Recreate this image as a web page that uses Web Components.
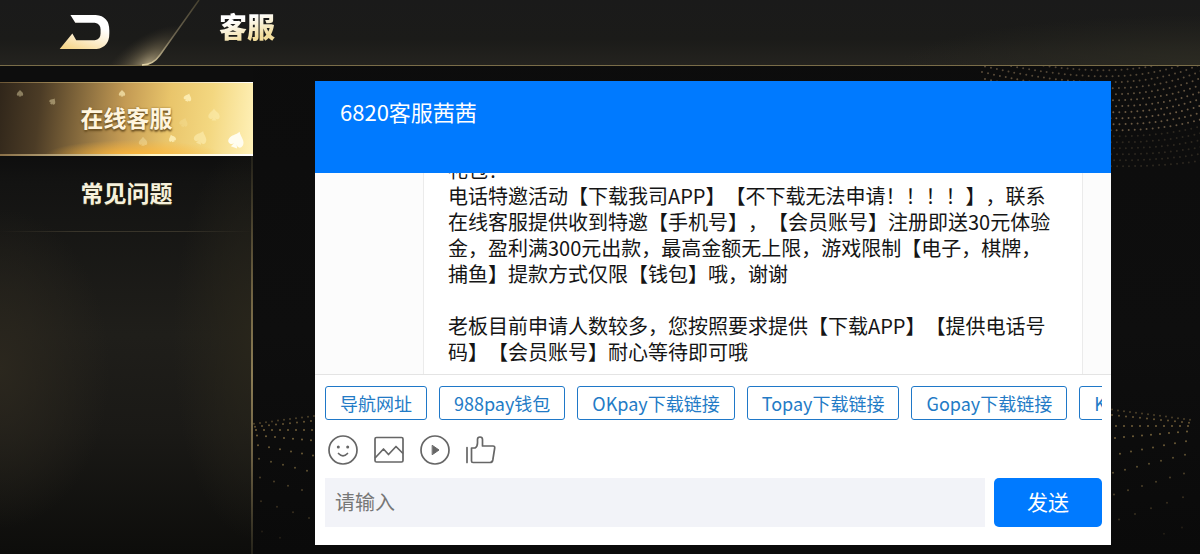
<!DOCTYPE html>
<html lang="zh-CN">
<head>
<meta charset="utf-8">
<meta name="viewport" content="width=device-width, initial-scale=1">
<title>客服</title>
<style>
html, body { margin: 0; height: 100%; background: #0b0b0b; }
body { font-family: "Noto Sans CJK SC", sans-serif; overflow: hidden; }
</style>
</head>
<body>
<service-page>
  <top-bar slot="header">客服</top-bar>
  <side-menu slot="menu">
    <side-item active>在线客服</side-item>
    <side-item>常见问题</side-item>
  </side-menu>
  <chat-panel>
    <span slot="title">6820客服茜茜</span>
    <chat-message slot="log">礼包！
电话特邀活动【下载我司APP】【不下载无法申请！！！！】，联系在线客服提供收到特邀【手机号】，【会员账号】注册即送30元体验金，盈利满300元出款，最高金额无上限，游戏限制【电子，棋牌，捕鱼】提款方式仅限【钱包】哦，谢谢

老板目前申请人数较多，您按照要求提供【下载APP】【提供电话号码】【会员账号】耐心等待即可哦</chat-message>
    <quick-reply slot="quick">导航网址</quick-reply>
    <quick-reply slot="quick">988pay钱包</quick-reply>
    <quick-reply slot="quick">OKpay下载链接</quick-reply>
    <quick-reply slot="quick">Topay下载链接</quick-reply>
    <quick-reply slot="quick">Gopay下载链接</quick-reply>
    <quick-reply slot="quick">K</quick-reply>
  </chat-panel>
</service-page>
<script>
class Base extends HTMLElement {
  constructor() {
    super();
    this.attachShadow({ mode: 'open' }).innerHTML = this.constructor.markup;
  }
}

customElements.define('dot-field', class extends HTMLElement {
  constructor() {
    super();
    // Receding rows of dots: [start y, slope, spacing, opacity].
    const rows = [
      [12, -.13, 6, .5], [15, -.1, 7, .7], [18, 0, 8, .8], [23, .09, 9, .8], [32, .19, 11, .75],
      [45, .25, 12, .65], [63, .3, 14, .5], [86, .35, 16, .35], [116, .35, 18, .2]];
    const wave = rows.map(([y, slope, step, o], i) => {
      let row = '';
      for (let x = 2 + i; x < 90; x += step) row += `<circle cx="${x}" cy="${y + x * slope}" r="1" opacity="${o}"/>`;
      return row;
    }).join('');
    let arcs = '';
    for (let i = 0; i < 18; i++) {
      const y = i * 6, o = i < 12 ? .75 - Math.abs(i - 9) * .03 : .25;
      arcs += `<path d="M${10 + i * 3} ${y - 22 + i} Q${165 + i} ${y + 20 - i} 245 ${y - 25 + i}" opacity="${o}"/>`;
    }
    this.attachShadow({ mode: 'open' }).innerHTML = `
      <style>
        :host { display: block; position: absolute; inset: 0; overflow: hidden; pointer-events: none;
          background: linear-gradient(#0c0c0c, #0e0e0e 60%, #0a0a0a); }
        svg { position: absolute; fill: #8b7445; }
        .arcs { top: 66px; right: 0; fill: none; stroke: #8d7658; stroke-width: 2; stroke-linecap: round; stroke-dasharray: 0 6; }
        .left { left: 252px; bottom: 14px; }
        .right { right: 8px; bottom: 18px; transform: scaleX(-1); }
      </style>
      <svg class="arcs" width="240" height="120" viewBox="0 0 240 120" aria-hidden="true">${arcs}</svg>
      <svg class="left" width="64" height="128" aria-hidden="true">${wave}</svg>
      <svg class="right" width="82" height="128" aria-hidden="true">${wave}</svg>`;
  }
});

customElements.define('service-page', class extends Base {
  static markup = `
    <style>
      :host { display: grid; grid-template: 66px minmax(0, 1fr) / 253px minmax(0, 1fr);
        height: 100vh; position: relative; isolation: isolate; }
      dot-field { z-index: -1; }
      header { grid-column: 1 / -1; }
      nav, main { min-height: 0; display: grid; }
      main { padding: 15px 89px 9px 62px; }
    </style>
    <dot-field></dot-field>
    <header><slot name="header"></slot></header>
    <nav><slot name="menu"></slot></nav>
    <main><slot></slot></main>`;
});

customElements.define('top-bar', class extends Base {
  static markup = `
    <style>
      :host { display: flex; align-items: flex-start; height: 66px; box-sizing: border-box; position: relative;
        border-bottom: 1px solid #7a6d49;
        background: radial-gradient(ellipse 300px 50px at 100% 100%, #2b2a22, transparent), linear-gradient(#1a1a1a, #1b1b19 60%, #24231f); }
      .tab { position: absolute; left: 0; top: 0; }
      button { position: relative; display: flex; align-items: center; width: 219px; height: 64px; padding: 0 0 0 59px; border: 0; background: none; cursor: pointer; }
      button svg { display: block; }
      h1 { position: relative; margin: 5px 0 0; font-size: 28px; line-height: 42px; font-weight: 900;
        background: linear-gradient(165deg, #fff 35%, #f1dc9c 75%); -webkit-background-clip: text; background-clip: text; color: transparent; }
    </style>
    <svg class="tab" width="220" height="66" viewBox="0 0 220 66" aria-hidden="true">
      <defs>
        <radialGradient id="g" gradientUnits="userSpaceOnUse" cx="0" cy="0" r="1" gradientTransform="translate(148 64) rotate(-35) scale(56 27)">
          <stop offset="0" stop-color="#a39676"/><stop offset=".4" stop-color="#665d47" stop-opacity=".75"/><stop offset="1" stop-color="#3a352a" stop-opacity="0"/>
        </radialGradient>
        <linearGradient id="l" x1="0" y1="1" x2="1" y2="0">
          <stop offset="0" stop-color="#e6d7a8"/><stop offset=".5" stop-color="#6c6450"/><stop offset="1" stop-color="#45402f"/>
        </linearGradient>
      </defs>
      <path d="M0 0H199L160 55Q153 65 142 65H0Z" fill="url(#g)"/>
      <path d="M199 0L160 55Q153 65 142 65" fill="none" stroke="url(#l)" stroke-width="1.5"/>
    </svg>
    <button type="button" aria-label="返回">
      <svg width="52" height="36" viewBox="0 0 52 37">
        <defs><linearGradient id="b" x1=".7" y1="0" x2=".2" y2="1"><stop offset=".25" stop-color="#fff"/><stop offset=".65" stop-color="#fbebc8"/><stop offset="1" stop-color="#f6d68b"/></linearGradient></defs>
        <path d="M11 1H37Q51 2 51 17V20Q51 34 38 36H0L13 20L17 27H36Q42 26 42 20V16Q42 10 36 9H16Z" fill="url(#b)"/>
      </svg>
    </button>
    <h1><slot></slot></h1>`;
});

customElements.define('side-menu', class extends Base {
  static markup = `
    <style>
      :host { display: flex; flex-direction: column; padding-top: 16px; box-sizing: border-box; min-height: 0; position: relative;
        background:
          radial-gradient(ellipse 110px 160px at 0 62%, #2b271e, transparent),
          radial-gradient(ellipse 80px 200px at 100% 56%, #28251b, transparent),
          linear-gradient(#0d0d0d 17%, #131312 24%, #1f1e1a 55%, #1a1916 75%, #0d0d0b); }
      .edge { position: absolute; right: 0; top: 90px; bottom: 0; width: 2px; background: linear-gradient(#24221a, #716443 35%, #8b7c54 55%, #6e6245 75%, #25231a); }
    </style>
    <div class="edge"></div>
    <slot></slot>`;
});

customElements.define('side-item', class extends Base {
  static markup = `
    <style>
      :host { display: block; position: relative; }
      a { display: grid; place-items: center; height: 75px; box-sizing: border-box; padding-bottom: 4px; position: relative;
        color: #f6f1dc; text-decoration: none; font-size: 23px; font-weight: 700; line-height: 32px; text-shadow: 0 1px 1px #3e371e;
        border-bottom: 1px solid; border-image: linear-gradient(90deg, transparent, #38342a 30%, #38342a 70%, transparent) 1; }
      svg { display: none; position: absolute; inset: 0; width: 100%; height: 100%; }
      span { position: relative; }
      :host([active]) a { height: 74px; border: 0; margin-bottom: 1px; color: #fff5de; text-shadow: 0 2px 2px #6b5022, 0 0 2px #8a6a30;
        background:
          linear-gradient(90deg, #6b5636, #ead08a 60%, #fff) top / 100% 1px no-repeat,
          linear-gradient(90deg, #8a7048, #fff7c8 60%, #fff) bottom / 100% 2px no-repeat,
          radial-gradient(ellipse 90px 16px at 53% 100%, #ffb638, transparent),
          linear-gradient(96deg, #30261a, #4c3c26 16%, #8d7040 34%, #c49b54 49%, #e9c56b 66%, #f3d780 82%, #fff1b8); }
      :host([active]) svg { display: block; }
    </style>
    <a href="#">
      <svg viewBox="0 0 253 74" preserveAspectRatio="none" aria-hidden="true" fill="#fff3bd">
        <defs><path id="s" d="M0-7C2-3 8-1 7 4C6 8 2 7 1 4L3 8H-3L-1 4C-3 8-8 6-7 2C-6-2-2-3 0-7Z"/></defs>
        <use href="#s" transform="translate(20 11) scale(.45)" opacity=".4"/>
        <use href="#s" transform="translate(53 19) rotate(35) scale(.45)" opacity=".4"/>
        <use href="#s" transform="translate(122 11) scale(.45)" opacity=".65"/>
        <use href="#s" transform="translate(188 15) rotate(20) scale(.55)" opacity=".8"/>
        <use href="#s" transform="translate(214 32) scale(.8)" opacity=".45"/>
        <use href="#s" transform="translate(184 40) rotate(20) scale(.6)" opacity=".2"/>
        <use href="#s" transform="translate(143 59) scale(.6)" opacity=".35"/>
        <use href="#s" transform="translate(172 56) rotate(-20) scale(.5)" opacity=".8"/>
        <use href="#s" transform="translate(201 55) rotate(20) scale(.9)" opacity=".5"/>
        <use href="#s" transform="translate(237 57) rotate(20) scale(1.1)" fill="#fffdf0"/>
      </svg>
      <span><slot></slot></span>
    </a>`;
});

customElements.define('chat-message', class extends Base {
  static markup = `
    <style>
      :host { display: block; margin: 0 28px 0 108px; padding: 200px 24px 9px; background: #fff; color: #151515;
        border: solid #ebebeb; border-width: 0 1px; font-size: 20px; line-height: 26px; white-space: pre-line; text-spacing-trim: space-all; }
    </style>
    <slot></slot>`;
});

customElements.define('quick-reply', class extends Base {
  static markup = `
    <style>
      :host { display: block; flex: none; }
      button { display: block; height: 34px; box-sizing: border-box; padding: 0 14px; border: 1px solid #1f78c8; border-radius: 3px;
        background: #fff; color: #237bc6; font: 18px/32px "Noto Sans CJK SC", sans-serif; white-space: nowrap; cursor: pointer; }
    </style>
    <button type="button"><slot></slot></button>`;
});

customElements.define('chat-panel', class extends Base {
  static markup = `
    <style>
      :host { display: flex; flex-direction: column; min-width: 0; min-height: 0; background: #fff; }
      h2 { flex: none; margin: 0; height: 92px; box-sizing: border-box; padding: 14px 25px 0; background: #007aff; color: #fff; font-size: 22px; line-height: 32px; font-weight: 400; }
      .log { flex: 1; min-height: 0; overflow: hidden; display: flex; flex-direction: column; justify-content: flex-end; background: #fcfcfc; border-bottom: 1px solid #e4e4e4; }
      .quick { flex: none; display: flex; gap: 12px; margin: 0 9px 0 10px; padding-top: 11px; overflow: hidden; }
      .tools { flex: none; display: flex; gap: 16px; padding: 13px 13px 11px; }
      .tools button { width: 30px; height: 34px; padding: 0; border: 0; background: none; cursor: pointer; display: grid; place-items: center; }
      .tools svg { display: block; fill: none; stroke: #666; stroke-width: 1.7; stroke-linejoin: round; stroke-linecap: round; }
      form { flex: none; display: flex; gap: 9px; margin: 0 9px 18px 10px; height: 49px; }
      input { flex: 1; min-width: 0; border: 0; border-radius: 0; padding: 0 10px 2px; background: #f2f3f8; font: 20px "Noto Sans CJK SC", sans-serif; }
      input::placeholder { color: #777; opacity: 1; }
      form button { width: 108px; border: 0; border-radius: 5px; padding: 0 0 3px; background: #007aff; color: #fff; font: 21px "Noto Sans CJK SC", sans-serif; cursor: pointer; }
    </style>
    <h2><slot name="title"></slot></h2>
    <div class="log"><slot name="log"></slot></div>
    <div class="quick"><slot name="quick"></slot></div>
    <div class="tools">
      <button type="button" aria-label="表情"><svg width="30" height="30" viewBox="0 0 30 30"><circle cx="15" cy="15" r="14"/><path d="M10.500 18.500Q15 23 19.500 18.500"/><g fill="#666" stroke="none"><circle cx="10.300" cy="12" r="1.500"/><circle cx="19.700" cy="12" r="1.500"/></g></svg></button>
      <button type="button" aria-label="图片"><svg width="30" height="30" viewBox="0 0 30 30"><rect x="1" y="2.500" width="28" height="24.500" rx="1.500"/><path d="M1.500 22.500L9.500 14L14.500 19.500L22 11.500L28.500 18"/></svg></button>
      <button type="button" aria-label="视频"><svg width="30" height="30" viewBox="0 0 30 30"><circle cx="15" cy="15" r="14"/><path d="M12.500 10.500L19 15L12.500 19.500Z" fill="#666" stroke-width="1"/></svg></button>
      <button type="button" aria-label="评价"><svg width="30" height="30" viewBox="0 0 30 30"><path d="M1 12.500V27.500M5.500 13H9Q11.500 11.500 11.500 8V4.500Q11.500 2 14 2Q16.500 2 16.500 4.500V11H27Q29 11 28.700 13L26.800 25Q26.300 27.500 24 27.500H7Q5.500 27.500 5.500 26Z"/></svg></button>
    </div>
    <form>
      <input type="text" aria-label="消息" placeholder="请输入">
      <button type="button">发送</button>
    </form>`;
});
</script>
</body>
</html>
